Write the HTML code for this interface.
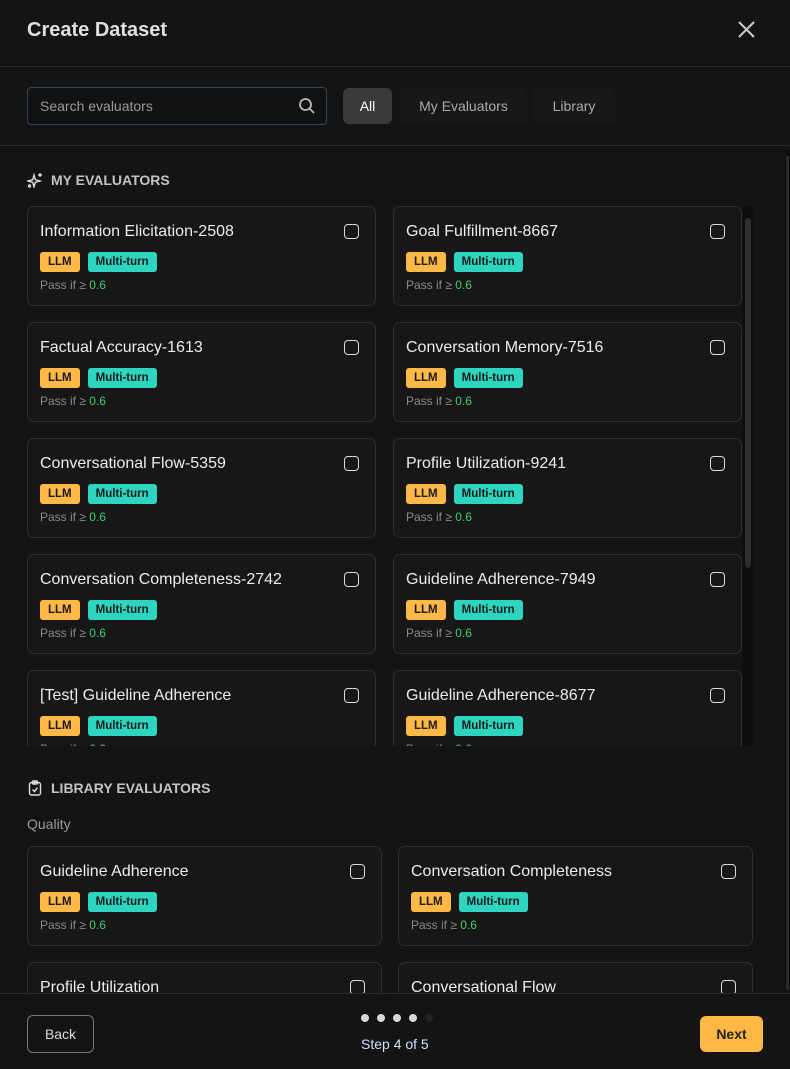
<!DOCTYPE html>
<html><head><meta charset="utf-8"><style>
*{box-sizing:border-box;margin:0;padding:0}
body{width:790px;height:1069px;background:#141414;font-family:"Liberation Sans",sans-serif;color:#e8e8e8;position:relative;overflow:hidden}
.abs{position:absolute}
.card{position:absolute;width:349px;height:100px;border:1px solid #2e2e2e;border-radius:7px;background:#171717}
.card .t{position:absolute;left:12px;top:16px;font-size:16px;color:#ececec}
.card .cb{position:absolute;right:16px;top:17px;width:15px;height:15px;border:1.5px solid #ddd;border-radius:4px}
.tags{position:absolute;left:12px;top:45px;display:flex;gap:8px}
.tag{height:20px;line-height:20px;padding:0 8px;border-radius:3px;font-size:11.5px;font-weight:bold;color:#1a1a1a}
.llm{background:#fdb845}.mt{background:#2dd4bf}
.pass{position:absolute;left:12px;top:71px;font-size:12px;color:#8a8a8a}
.pass b{color:#3ecf6a;font-weight:normal}
.sec{position:absolute;left:27px;font-size:14px;font-weight:bold;color:#c8c3c3;display:flex;align-items:center;gap:8px}
</style></head><body>
<div class="abs" style="left:27px;top:19px;font-size:20px;font-weight:bold;color:#e0e0e0">Create Dataset</div>
<svg class="abs" style="left:737px;top:20px" width="19" height="19" viewBox="0 0 19 19"><path d="M2 2L17 17M17 2L2 17" stroke="#ccc" stroke-width="2"/></svg>
<div class="abs" style="left:0;top:66px;width:790px;height:1px;background:#2a2a2a"></div>
<div class="abs" style="left:27px;top:87px;width:300px;height:38px;border:1px solid #34435a;border-radius:4px;background:#121212"></div>
<div class="abs" style="left:40px;top:98px;font-size:14px;color:#9a9a9a">Search evaluators</div>
<svg class="abs" style="left:298px;top:97px" width="18" height="18" viewBox="0 0 18 18"><circle cx="7.5" cy="7.5" r="5.5" stroke="#bbb" stroke-width="1.8" fill="none"/><path d="M11.5 11.5L16 16" stroke="#bbb" stroke-width="1.8"/></svg>
<div class="abs" style="left:343px;top:88px;width:49px;height:36px;border-radius:6px;background:#3a3a3a;color:#fff;font-size:14px;text-align:center;line-height:36px">All</div>
<div class="abs" style="left:400px;top:88px;width:127px;height:36px;border-radius:6px;background:#181818;color:#aaa;font-size:14px;text-align:center;line-height:36px">My Evaluators</div>
<div class="abs" style="left:533px;top:88px;width:82px;height:36px;border-radius:6px;background:#181818;color:#aaa;font-size:14px;text-align:center;line-height:36px">Library</div>
<div class="abs" style="left:0;top:145px;width:790px;height:1px;background:#2a2a2a"></div>
<div class="abs" style="left:785px;top:150px;width:5px;height:840px;background:#0c0c0c"></div>
<div class="abs" style="left:786px;top:156px;width:3px;height:834px;background:#2b2b2b"></div>

<div class="sec" style="top:172px"><svg width="16" height="16" viewBox="0 0 16 16" fill="none" stroke="#ddd" stroke-width="1.4"><path d="M7 3L8.3 7.7 13 9 8.3 10.3 7 15 5.7 10.3 1 9 5.7 7.7Z"/><path d="M13 1v4M11 3h4"/><circle cx="2.5" cy="14" r="1"/></svg>MY EVALUATORS</div>

<div class="abs" style="left:0;top:206px;width:790px;height:540px;overflow:hidden">
<div id="grid"></div>
</div>
<div class="abs" style="left:743px;top:206px;width:10px;height:540px;background:#0d0d0d"></div>
<div class="abs" style="left:745px;top:218px;width:6px;height:350px;border-radius:3px;background:#2e2e2e"></div>

<div class="sec" style="top:780px"><svg width="16" height="16" viewBox="0 0 16 16" fill="none" stroke="#ddd" stroke-width="1.4"><rect x="2.5" y="2.5" width="11" height="12.5" rx="2"/><rect x="5.5" y="1" width="5" height="3" rx="1"/><path d="M5.5 9.5l2 2 3-4"/></svg>LIBRARY EVALUATORS</div>
<div class="abs" style="left:27px;top:816px;font-size:14px;color:#9a9a9a">Quality</div>

<div class="card" style="left:27px;top:846px;width:355px"><div class="t">Guideline Adherence</div><div class="cb"></div><div class="tags"><span class="tag llm">LLM</span><span class="tag mt">Multi-turn</span></div><div class="pass">Pass if ≥ <b>0.6</b></div></div>
<div class="card" style="left:398px;top:846px;width:355px"><div class="t">Conversation Completeness</div><div class="cb"></div><div class="tags"><span class="tag llm">LLM</span><span class="tag mt">Multi-turn</span></div><div class="pass">Pass if ≥ <b>0.6</b></div></div>
<div class="card" style="left:27px;top:962px;width:355px"><div class="t">Profile Utilization</div><div class="cb"></div></div>
<div class="card" style="left:398px;top:962px;width:355px"><div class="t">Conversational Flow</div><div class="cb"></div></div>

<div class="abs" style="left:0;top:993px;width:790px;height:76px;background:#141414;border-top:1px solid #2a2a2a"></div>
<div class="abs" style="left:27px;top:1015px;width:67px;height:38px;border:1px solid #777;border-radius:6px;color:#ddd;font-size:14px;text-align:center;line-height:36px">Back</div>
<div class="abs" style="left:361px;top:1014px;display:flex;gap:8px"><i style="width:8px;height:8px;border-radius:50%;background:#d6d6dc"></i><i style="width:8px;height:8px;border-radius:50%;background:#d6d6dc"></i><i style="width:8px;height:8px;border-radius:50%;background:#d6d6dc"></i><i style="width:8px;height:8px;border-radius:50%;background:#d6d6dc"></i><i style="width:8px;height:8px;border-radius:50%;background:#222"></i></div>
<div class="abs" style="left:361px;top:1036px;font-size:14px;color:#cfe0f5">Step 4 of 5</div>
<div class="abs" style="left:700px;top:1016px;width:63px;height:36px;border-radius:6px;background:#fdb845;color:#222;font-size:14px;font-weight:bold;text-align:center;line-height:36px">Next</div>

<script>
var n=[["Information Elicitation-2508","Goal Fulfillment-8667"],["Factual Accuracy-1613","Conversation Memory-7516"],["Conversational Flow-5359","Profile Utilization-9241"],["Conversation Completeness-2742","Guideline Adherence-7949"],["[Test] Guideline Adherence","Guideline Adherence-8677"]];
var h="";n.forEach(function(r,i){r.forEach(function(t,j){h+='<div class="card" style="left:'+(j?393:27)+'px;top:'+(i*116)+'px"><div class="t">'+t+'</div><div class="cb"></div><div class="tags"><span class="tag llm">LLM</span><span class="tag mt">Multi-turn</span></div><div class="pass">Pass if ≥ <b>0.6</b></div></div>';});});
document.getElementById("grid").innerHTML=h;
</script>
</body></html>
